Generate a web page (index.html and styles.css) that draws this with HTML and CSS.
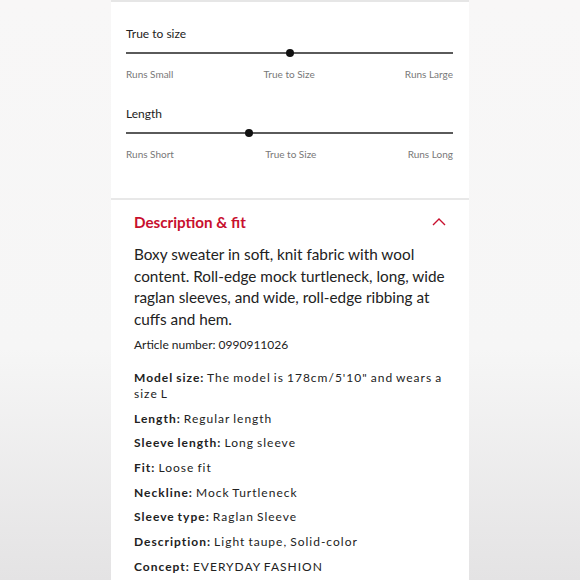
FILE: index.html
```html
<!DOCTYPE html>
<html lang="en">
  <head>
    <meta charset="UTF-8" />
    <meta name="viewport" content="width=device-width, initial-scale=1.0" />
    <title>Description &amp; fit</title>
    <link rel="stylesheet" href="styles.css">
  </head>
  <body>
    <div class="page">
      <section class="fit-card">
        <div class="scale">
          <p class="scale-title">True to size</p>
          <div class="track">
            <span class="dot" style="left: 50%"></span>
          </div>
          <div class="scale-labels">
            <span>Runs Small</span>
            <span>True to Size</span>
            <span>Runs Large</span>
          </div>
        </div>

        <div class="scale">
          <p class="scale-title">Length</p>
          <div class="track">
            <span class="dot" style="left: 37.5%"></span>
          </div>
          <div class="scale-labels">
            <span>Runs Short</span>
            <span>True to Size</span>
            <span>Runs Long</span>
          </div>
        </div>
      </section>

      <section class="desc-card">
        <div class="desc-head">
          <h2>Description &amp; fit</h2>
          <svg class="chevron" width="14" height="9" viewBox="0 0 14 9">
            <polyline points="1,8 7,2 13,8" fill="none" stroke="#c8102e" stroke-width="1.4" />
          </svg>
        </div>

        <p class="desc-text">
          Boxy sweater in soft, knit fabric with wool content. Roll-edge mock turtleneck, long, wide
          raglan sleeves, and wide, roll-edge ribbing at cuffs and hem.
        </p>

        <p class="article">Article number: 0990911026</p>

        <div class="details">
          <p class="row"><b>Model size:</b> The model is 178cm/5'10" and wears a size L</p>
          <p class="row"><b>Length:</b> Regular length</p>
          <p class="row"><b>Sleeve length:</b> Long sleeve</p>
          <p class="row"><b>Fit:</b> Loose fit</p>
          <p class="row"><b>Neckline:</b> Mock Turtleneck</p>
          <p class="row"><b>Sleeve type:</b> Raglan Sleeve</p>
          <p class="row"><b>Description:</b> Light taupe, Solid-color</p>
          <p class="row"><b>Concept:</b> EVERYDAY FASHION</p>
        </div>
      </section>
    </div>
  </body>
</html>
```

FILE: styles.css
```css
html,
body {
  margin: 0;
  height: 100%;
  overflow: hidden;
}

body {
  font-family: Lato, "Liberation Sans", sans-serif;
  color: #222;
  background: linear-gradient(180deg, #f8f7f7 0%, #f6f6f6 60%, #e4e3e4 100%);
}

p {
  margin: 0;
}

.page {
  width: 358px;
  height: 100vh;
  margin: 0 auto;
  display: flex;
  flex-direction: column;
  overflow: hidden;
}

.fit-card {
  background: #fff;
  border-top: 2px solid #e6e6e6;
  padding: 25px 16px 38px 15px;
}

.scale + .scale {
  margin-top: 27px;
}

.scale-title {
  font-size: 12px;
  line-height: 14px;
  color: #222;
}

.track {
  position: relative;
  height: 10px;
  margin-top: 7px;
}

.track::before {
  content: "";
  position: absolute;
  left: 0;
  right: 0;
  top: 4px;
  height: 1.5px;
  background: #5a5a5a;
}

.dot {
  position: absolute;
  top: 1px;
  width: 8px;
  height: 8px;
  margin-left: -4px;
  border-radius: 50%;
  background: #111;
}

.scale-labels {
  display: flex;
  justify-content: space-between;
  margin-top: 10px;
  font-size: 10px;
  line-height: 12px;
  color: #787878;
}

.desc-card {
  flex: 1;
  background: #fff;
  border-top: 2px solid #e8e8e8;
  padding: 13px 19px 0 23px;
}

.desc-head {
  display: flex;
  justify-content: space-between;
  align-items: center;
}

.desc-head h2 {
  margin: 0;
  font-size: 15.2px;
  line-height: 18px;
  font-weight: 700;
  color: #c8102e;
}

.chevron {
  margin-top: -2px;
  margin-right: 4px;
}

.desc-text {
  margin-top: 13px;
  font-size: 15.3px;
  line-height: 21.5px;
  color: #222;
}

.article {
  margin-top: 7px;
  font-size: 12px;
  line-height: 16px;
}

.details {
  margin-top: 17px;
  font-size: 12px;
  line-height: 16px;
  letter-spacing: 1px;
}

.row {
  margin-bottom: 8.7px;
  word-spacing: -1px;
}
```
